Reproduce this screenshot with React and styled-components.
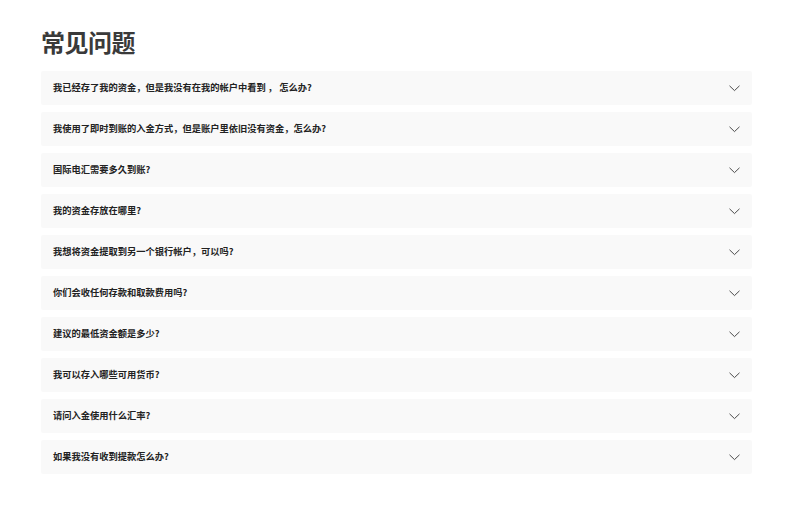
import React from "react";
import styled, { createGlobalStyle } from "styled-components";

const Global = createGlobalStyle`
  html, body { margin: 0; padding: 0; background: #fff; }
  body { font-family: "Noto Sans CJK SC", "Noto Sans", sans-serif; }
`;

const Page = styled.div`
  padding: 28px 48px 0 41px;
  width: 711px;
`;

const Title = styled.h2`
  margin: 0 0 15px;
  font-size: 24px;
  line-height: 28px;
  font-weight: 700;
  color: #3a3a3a;
  letter-spacing: -0.5px;
`;

const List = styled.div`
  display: flex;
  flex-direction: column;
  gap: 7px;
`;

const Item = styled.button`
  display: flex;
  align-items: center;
  justify-content: space-between;
  height: 34px;
  padding: 0 12px;
  border: none;
  border-radius: 2px;
  background: #f9f9f9;
  font-family: inherit;
  cursor: pointer;
  text-align: left;
`;

const Question = styled.span`
  font-size: 9.25px;
  font-weight: 700;
  color: #222;
  line-height: 1;
`;

const Chevron = () => (
  <svg width="11" height="7" viewBox="0 0 11 7" fill="none" style={{ marginTop: 1 }}>
    <path d="M0.5 0.8 L5.5 5.6 L10.5 0.8" stroke="#4a4a4a" strokeWidth="1" />
  </svg>
);

const questions = [
  "我已经存了我的资金，但是我没有在我的帐户中看到 ， 怎么办?",
  "我使用了即时到账的入金方式，但是账户里依旧没有资金，怎么办?",
  "国际电汇需要多久到账?",
  "我的资金存放在哪里?",
  "我想将资金提取到另一个银行帐户，可以吗?",
  "你们会收任何存款和取款费用吗?",
  "建议的最低资金额是多少?",
  "我可以存入哪些可用货币?",
  "请问入金使用什么汇率?",
  "如果我没有收到提款怎么办?",
];

export default function App() {
  return (
    <>
      <Global />
      <Page>
        <Title>常见问题</Title>
        <List>
          {questions.map((q) => (
            <Item key={q}>
              <Question>{q}</Question>
              <Chevron />
            </Item>
          ))}
        </List>
      </Page>
    </>
  );
}
